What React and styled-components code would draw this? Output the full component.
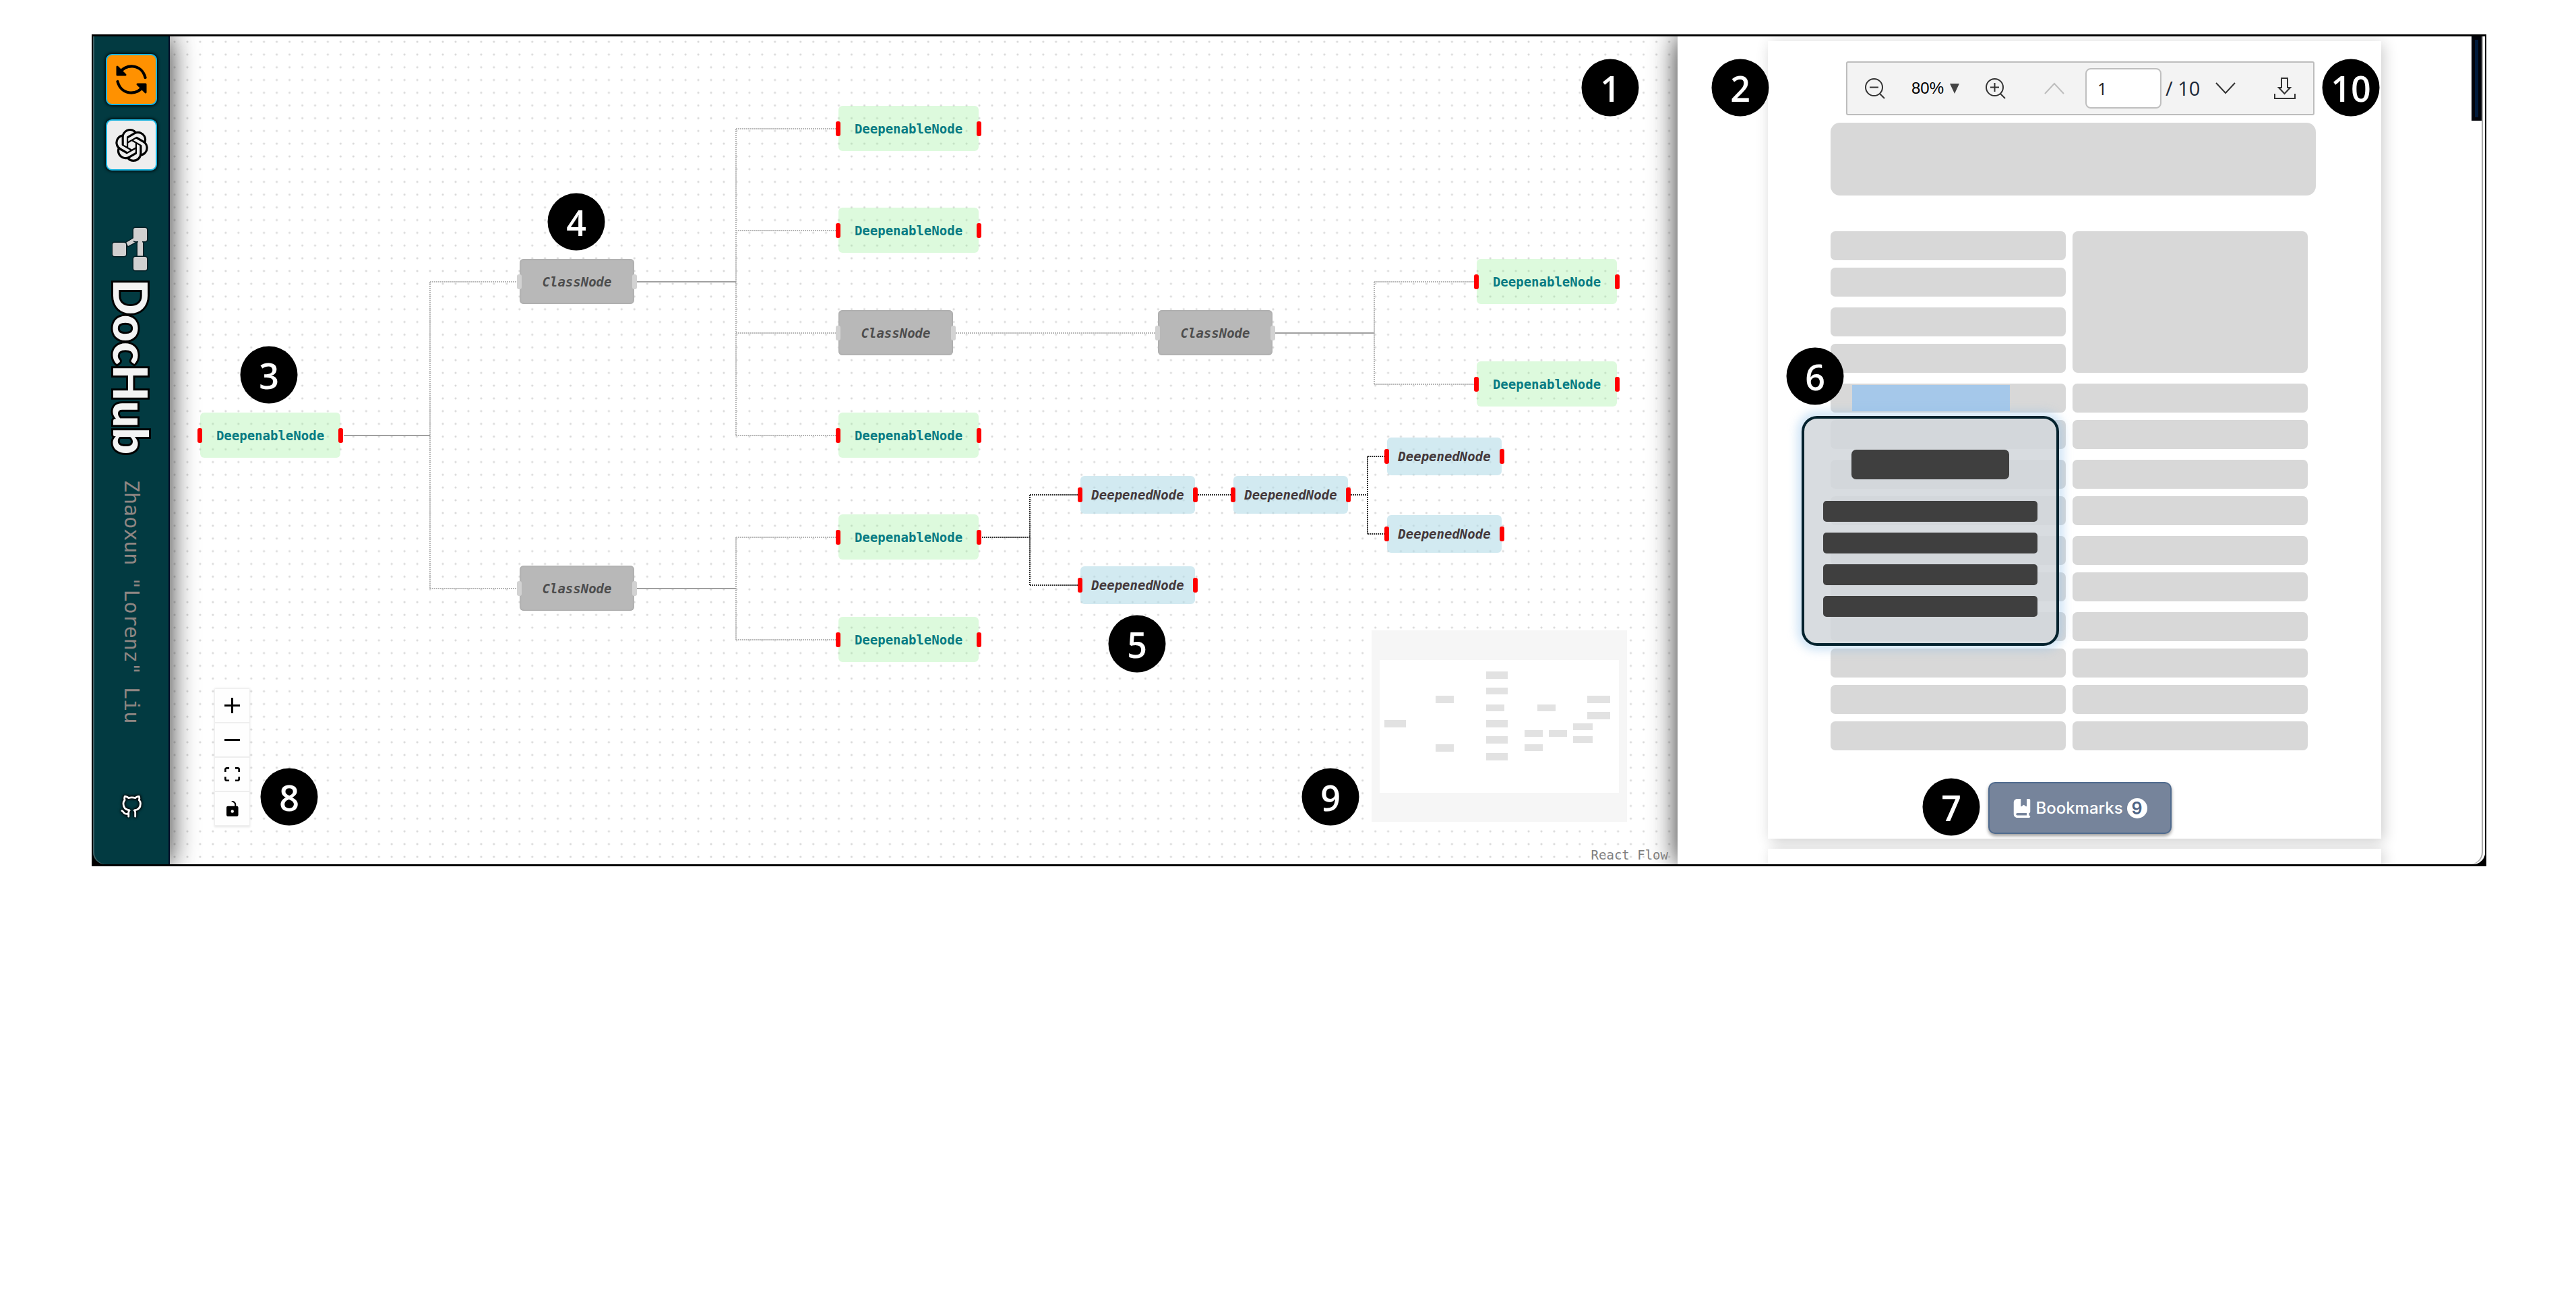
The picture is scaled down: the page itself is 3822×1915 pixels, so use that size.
import React from 'react';
import styled, { createGlobalStyle, css } from 'styled-components';
import { SiOpenai } from 'react-icons/si';
import { FaBookBookmark } from 'react-icons/fa6';
import { FiGithub } from 'react-icons/fi';

const mono = '"DejaVu Sans Mono", monospace';

const GlobalStyle = createGlobalStyle`
  * { box-sizing: border-box; }
  body { margin: 0; background: #fff; font-family: "Open Sans", sans-serif; }
  button { font: inherit; padding: 0; border: 0; background: none; color: inherit; cursor: pointer; }
`;

const Frame = styled.main`
  display: grid;
  grid-template-columns: 114px minmax(0, 2237fr) minmax(0, 1198fr);
  margin: 51px 133px 0 136px;
  border: solid #000;
  border-width: 3px 2px;
  background: #000;
  overflow: hidden;
`;

/* ---------- sidebar ---------- */

const Sidebar = styled.nav`
  display: flex;
  flex-direction: column;
  align-items: center;
  position: relative;
  z-index: 2;
  padding: 26px 0 68px 2px;
  background: #023a41;
  border-right: 2px solid #020c26;
  border-bottom-left-radius: 18px;
  box-shadow: inset 2px 0 #3f6065, 0 0 40px rgba(0, 0, 0, 0.85);
`;

const SideButton = styled.button`
  display: grid;
  place-items: center;
  width: 76px;
  height: 76px;
  margin-bottom: 21px;
  border: 2px solid #19b4e0;
  border-radius: 9px;
  background: ${(p) => p.$color};
  color: #000;
  box-shadow: 0 0 4px 1px #000;
`;

const Brand = styled.div`
  display: flex;
  flex-direction: column;
  align-items: center;
  margin-top: 61px;
`;

const BrandName = styled.h1`
  margin: 9px 0 0;
  writing-mode: vertical-rl;
  font: 900 70px/84px Lato, sans-serif;
  color: #f3f3f3;
  -webkit-text-stroke: 6px #000;
  paint-order: stroke fill;
`;

const Author = styled.span`
  margin-top: 38px;
  writing-mode: vertical-rl;
  font: 30px/36px ${mono};
  color: #8f8683;
`;

const GithubLink = styled.a`
  display: flex;
  margin-top: auto;
  color: #fff;
  filter: drop-shadow(0 0 2px #000) drop-shadow(0 0 1px #000);
`;

/* ---------- flow pane ---------- */

const FlowPane = styled.section`
  position: relative;
  background: #fff radial-gradient(circle at 7px 8px, #d9d9d9 1px, transparent 2px) 0 0 / 19px 19px round;
`;

const EdgeLayer = styled.svg`
  position: absolute;
  inset: 0;
  width: 100%;
  height: 100%;
  fill: none;
  stroke-width: 2;
`;

const variants = {
  deepenable: css`
    width: 208px; height: 67px; background: rgba(144, 238, 144, 0.3); color: #077b83;
    --handle: #f00;
  `,
  class: css`
    width: 170px; height: 67px; background: #b8b8b8; color: #4d4d4d; font-style: italic;
    box-shadow: inset 0 0 2px 1px #aaa;
    --handle: #d2d2d2;
  `,
  deepened: css`
    width: 170px; height: 56px; background: rgba(173, 216, 230, 0.55); color: #44383a; font-style: italic;
    --handle: #f00;
  `,
};

const NodeBox = styled.div`
  position: absolute;
  display: flex;
  align-items: center;
  justify-content: center;
  border-radius: 6px;
  font: 700 19px/22px ${mono};
  transform: translateY(${(p) => (p.$kind === 'deepened' ? '-28px' : '-34px')});
  ${(p) => variants[p.$kind]}
  &::before, &::after {
    content: "";
    position: absolute;
    top: calc(50% - 11px);
    width: 7px;
    height: 22px;
    border-radius: 3px;
    background: var(--handle);
  }
  &::before { left: -4px; }
  &::after { right: -4px; }
`;

const Controls = styled.div`
  position: absolute;
  left: 67px;
  bottom: 56px;
  display: flex;
  flex-direction: column;
  box-shadow: 0 0 3px 1px rgba(0, 0, 0, 0.1);
`;

const ControlButton = styled.button`
  display: grid;
  place-items: center;
  width: 51px;
  height: 51px;
  background: #fefefe;
  border-bottom: 2px solid #eee;
`;

const MiniMap = styled.svg`
  position: absolute;
  right: 75px;
  bottom: 63px;
  width: 379px;
  height: 284px;
  background: #f6f6f6;
`;

const Attribution = styled.a`
  position: absolute;
  right: 0;
  bottom: 0;
  z-index: 4;
  padding: 2px 14px 2px 12px;
  font: 19px/24px ${mono};
  color: #808080;
  text-decoration: none;
`;

const Callout = styled.span`
  position: absolute;
  z-index: 5;
  display: grid;
  place-items: center;
  width: 85px;
  height: 85px;
  border-radius: 50%;
  transform: translate(-50%, -50%);
  background: #000;
  color: #fff;
  font: 600 52px/64px "Open Sans", sans-serif;
`;

/* ---------- document pane ---------- */

const DocPane = styled.section`
  position: relative;
  z-index: 2;
  display: grid;
  grid-template-columns: minmax(0, 1fr) 20px;
  background: #fff;
  border-bottom-right-radius: 18px;
  box-shadow: inset -3px 0 #fff, inset -5px 0 #aaa, 0 0 40px rgba(0, 0, 0, 0.85);
`;

const ScrollThumb = styled.div`
  width: 15px;
  height: 125px;
  border: 5px solid #02040a;
  background: #001a3c;
`;

const Pages = styled.div`
  display: flex;
  flex-direction: column;
  align-items: center;
  gap: 15px;
  padding-top: 7px;
  overflow: hidden;
`;

const Page = styled.article`
  width: 910px;
  padding: ${(p) => (p.$peek ? '0' : '30px 97px 131px 93px')};
  min-height: 23px;
  background: #fff;
  box-shadow: 4px 4px 20px rgba(0, 0, 0, 0.2);
`;

const Toolbar = styled.div`
  position: relative;
  display: flex;
  align-items: center;
  height: 80px;
  margin: 0 2px 0 23px;
  padding: 0 25px;
  background: #f3f3f3;
  border: 2px solid #bdbdbd;
  border-radius: 3px;
  color: #222;
`;

const ToolButton = styled.button`
  display: flex;
  margin-left: ${(p) => p.$gap || 0}px;
  color: ${(p) => (p.disabled ? '#bdbdbd' : '#333')};
`;

const ZoomLevel = styled.button`
  display: flex;
  align-items: center;
  gap: 9px;
  margin: 0 39px;
  font: 24px/30px "Liberation Sans", Arial, sans-serif;
  color: #000;
`;

const PageInput = styled.input`
  width: 113px;
  height: 60px;
  margin-left: 31px;
  padding: 0 16px;
  border: 2px solid #bfbfbf;
  border-radius: 8px;
  background: #fff;
  color: #222;
  font: 25px/30px "Open Sans", sans-serif;
`;

const PageTotal = styled.span`
  margin-left: 6px;
  width: 50px;
  white-space: nowrap;
  font: 29px/40px "Open Sans", sans-serif;
  color: #1c2838;
`;

const Banner = styled.div`
  height: 108px;
  margin: 11px 0 53px;
  border-radius: 14px;
  background: #d8d8d8;
`;

const Columns = styled.div`
  display: grid;
  grid-template-columns: 349px 349px;
  gap: 10px;
  align-items: start;
`;

const Column = styled.div`
  display: flex;
  flex-direction: column;
  gap: 16px;
`;

const Paragraph = styled.div`
  display: grid;
  gap: 11px;
`;

const Line = styled.div`
  height: 43px;
  border-radius: 7px;
  background: #d8d8d8;
`;

const Figure = styled.div`
  height: 210px;
  border-radius: 8px;
  background: #d8d8d8;
`;

const MarkedLine = styled(Line)`
  padding: 2px 83px 2px 32px;
`;

const Highlight = styled.div`
  height: 39px;
  background: #a5c8ea;
`;

const Popup = styled.aside`
  position: absolute;
  left: 184px;
  top: 563px;
  z-index: 3;
  width: 382px;
  height: 341px;
  display: flex;
  flex-direction: column;
  align-items: center;
  gap: 16px;
  padding-top: 46px;
  border: 4px solid #03222e;
  border-radius: 23px;
  background: rgba(210, 215, 219, 0.87);
  box-shadow: 0 0 14px 7px rgba(140, 190, 232, 0.4);
`;

const PopupTitle = styled.div`
  width: 234px;
  height: 44px;
  margin-bottom: 16px;
  border-radius: 7px;
  background: #3f3f3f;
`;

const PopupLine = styled.div`
  width: 318px;
  height: 31px;
  border-radius: 5px;
  background: #3f3f3f;
`;

const Bookmarks = styled.button`
  position: absolute;
  left: 461px;
  bottom: 45px;
  z-index: 3;
  display: flex;
  align-items: center;
  justify-content: center;
  gap: 6px;
  width: 272px;
  height: 77px;
  border: 2px solid #506b8e;
  border-radius: 10px;
  background: #76849b;
  box-shadow: 0 3px 5px rgba(0, 0, 0, 0.4);
  color: #fff;
  font: 500 24px/30px Inter, sans-serif;
`;

const Count = styled.span`
  display: grid;
  place-items: center;
  width: 30px;
  height: 30px;
  border-radius: 50%;
  background: #fff;
  color: #4d6384;
  font-weight: 600;
  font-size: 25px;
`;

/* ---------- data ---------- */

const nodes = [
  ['deepenable', 45, 592], ['class', 519, 364], ['class', 519, 819],
  ['deepenable', 992, 137], ['deepenable', 992, 288], ['class', 992, 440],
  ['deepenable', 992, 592], ['deepenable', 992, 743], ['deepenable', 992, 895],
  ['class', 1466, 440], ['deepenable', 1939, 364], ['deepenable', 1939, 516],
  ['deepened', 1351, 680], ['deepened', 1351, 814], ['deepened', 1578, 680],
  ['deepened', 1806, 623], ['deepened', 1806, 738],
];
const labels = { deepenable: 'DeepenableNode', class: 'ClassNode', deepened: 'DeepenedNode' };

const lightEdges =
  'M386 364V819 M386 364H515 M386 819H515 M840 137V592 M840 137H988 M840 288H988 M840 440H988 M840 592H988 ' +
  'M840 743V895 M840 743H988 M840 895H988 M1166 440H1462 M1787 364V516 M1787 364H1935 M1787 516H1935';
const sharedEdges = 'M258 592H386 M693 364H840 M693 819H840 M1640 440H1787';
const darkEdges =
  'M1205 743H1276 M1276 680V814 M1276 680H1347 M1276 814H1347 M1525 680H1574 M1752 680H1777 M1777 623V738 M1777 623H1802 M1777 738H1802';

const miniNodes = [
  [19, 133, 32, 11], [95, 97, 27, 11], [95, 169, 27, 11], [170, 61, 32, 11], [170, 85, 32, 10],
  [170, 110, 27, 10], [170, 133, 32, 11], [170, 157, 32, 11], [170, 182, 32, 11], [246, 110, 27, 10],
  [227, 148, 27, 10], [263, 148, 27, 10], [227, 169, 27, 10], [299, 138, 29, 10], [299, 157, 29, 10],
  [320, 97, 34, 11], [320, 121, 34, 11],
];

const controls = [
  ['Zoom in', '0 0 32 32', 23, 'M32 18.133H18.133V32h-4.266V18.133H0v-4.266h13.867V0h4.266v13.867H32z'],
  ['Zoom out', '0 0 32 5', 23, 'M0 0h32v4.2H0z'],
  ['Fit view', '0 0 32 30', 23, 'M3.692 4.63c0-.53.4-.938.939-.938h5.215V0H4.708C2.13 0 0 2.054 0 4.63v5.216h3.692V4.631zM27.354 0h-5.2v3.692h5.17c.53 0 .984.4.984.939v5.215H32V4.631A4.624 4.624 0 0027.354 0zm.954 24.83c0 .532-.4.94-.939.94h-5.215v3.768h5.215c2.577 0 4.631-2.13 4.631-4.707v-5.139h-3.692v5.139zm-23.677.94c-.531 0-.939-.4-.939-.94v-5.138H0v5.139c0 2.577 2.13 4.707 4.708 4.707h5.138V25.77H4.631z'],
  ['Lock', '0 0 25 32', 18, 'M21.333 10.667H19.81V7.619C19.81 3.429 16.38 0 12.19 0c-4.114 1.828-1.37 2.133.305 2.438 1.676.305 4.42 2.59 4.42 5.181v3.048H3.047A3.056 3.056 0 000 13.714v15.238A3.056 3.056 0 003.048 32h18.285a3.056 3.056 0 003.048-3.048V13.714a3.056 3.056 0 00-3.048-3.047zM12.19 24.533a3.056 3.056 0 01-3.047-3.047 3.056 3.056 0 013.047-3.048 3.056 3.056 0 013.048 3.048 3.056 3.056 0 01-3.048 3.047z'],
];

const flowCallouts = [[1, 2137, 76], [3, 147, 502], [4, 603, 275], [5, 1435, 901], [8, 177, 1128], [9, 1722, 1128]];
const docCallouts = [[2, 93, 76], [6, 204, 504], [7, 406, 1143], [10, 999, 76]];

const Callouts = ({ items }) =>
  items.map(([n, x, y]) => <Callout key={n} style={{ left: x, top: y }}>{n}</Callout>);

/* ---------- icons ---------- */

const RefreshIcon = () => (
  <svg width="46" height="46" viewBox="0 0 46 46" fill="none" stroke="#000" strokeWidth="4.2" strokeLinecap="round">
    <path d="M5 14C13-1 38-1 43.500 20" />
    <path d="M41 32C33 47 8 47 2.500 26" />
    <path d="M2 4V16H14Z" fill="#000" strokeWidth="3" strokeLinejoin="round" />
    <path d="M44 42V30H32Z" fill="#000" strokeWidth="3" strokeLinejoin="round" />
  </svg>
);

const BrandIcon = () => (
  <svg width="58" height="70" viewBox="-1 -3 58 70" fill="#d0d0d0" stroke="#011c22" strokeWidth="3" paintOrder="stroke" strokeLinejoin="round">
    <path d="M20 22L38 12V19L23 27Z" />
    <path d="M37 15H45V48H37Z" />
    <rect x="31" y="0" width="20" height="20" rx="3" />
    <rect x="0" y="22" width="20" height="20" rx="3" />
    <rect x="31" y="43" width="20" height="20" rx="3" />
    <path d="M22 21L33 14V18L24 25Z M38 18H44V41H38Z" stroke="none" />
  </svg>
);

const ZoomIcon = ({ plus }) => (
  <svg width="30" height="32" viewBox="0 0 30 32" fill="none" stroke="currentColor" strokeWidth="2">
    <circle cx="13.500" cy="14.500" r="12.500" />
    <path d={'M22 24L29 31M7 14.500H20' + (plus ? 'M13.500 8V21' : '')} />
  </svg>
);

const Chevron = ({ down }) => (
  <svg width="30" height="18" viewBox="0 0 30 18" fill="none" stroke="currentColor" strokeWidth="2">
    <path d={down ? 'M1 1L15 16L29 1' : 'M1 17L15 2L29 17'} />
  </svg>
);

const DownloadIcon = () => (
  <svg width="32" height="32" viewBox="0 0 32 32" fill="none" stroke="currentColor" strokeWidth="2">
    <path d="M11 1H20V15H24L15.500 24L7 15H11Z M1 24V31H31V24" />
  </svg>
);

const Triangle = () => (
  <svg width="14" height="15" viewBox="0 0 14 15" fill="#444"><path d="M0 0H14L7 15Z" /></svg>
);

/* ---------- page ---------- */

const Lines = ({ n = 2 }) => (
  <Paragraph>{Array.from({ length: n }, (_, i) => <Line key={i} />)}</Paragraph>
);

export default function App() {
  return (
    <>
      <GlobalStyle />
      <Frame>
        <Sidebar>
          <SideButton $color="#ff9100" aria-label="Refresh"><RefreshIcon /></SideButton>
          <SideButton $color="#eee" aria-label="Assistant"><SiOpenai size={49} /></SideButton>
          <Brand>
            <BrandIcon />
            <BrandName>DocHub</BrandName>
            <Author>Zhaoxun "Lorenz" Liu</Author>
          </Brand>
          <GithubLink href="#" aria-label="GitHub"><FiGithub size={34} /></GithubLink>
        </Sidebar>

        <FlowPane>
          <EdgeLayer>
            <path d={lightEdges} stroke="#b8b8b8" strokeDasharray="2 1" />
            <path d={sharedEdges} stroke="#a0a0a0" />
            <path d={darkEdges} stroke="#333" strokeDasharray="2 1" />
          </EdgeLayer>
          {nodes.map(([kind, x, y], i) => (
            <NodeBox key={i} $kind={kind} style={{ left: x, top: y }}>{labels[kind]}</NodeBox>
          ))}
          <Controls>
            {controls.map(([label, box, width, d]) => (
              <ControlButton key={label} aria-label={label}>
                <svg width={width} viewBox={box}><path d={d} /></svg>
              </ControlButton>
            ))}
          </Controls>
          <MiniMap viewBox="0 0 379 284">
            <rect x="12" y="44" width="355" height="197" fill="#fff" />
            {miniNodes.map(([x, y, w, h], i) => (
              <rect key={i} x={x} y={y} width={w} height={h} fill="#e2e2e2" />
            ))}
          </MiniMap>
          <Attribution href="#">React Flow</Attribution>
          <Callouts items={flowCallouts} />
        </FlowPane>

        <DocPane>
          <Pages>
            <Page>
              <Toolbar>
                <ToolButton aria-label="Zoom out" $gap={1}><ZoomIcon /></ToolButton>
                <ZoomLevel>80%<Triangle /></ZoomLevel>
                <ToolButton aria-label="Zoom in"><ZoomIcon plus /></ToolButton>
                <ToolButton aria-label="Previous page" $gap={57} disabled><Chevron /></ToolButton>
                <PageInput aria-label="Page" defaultValue="1" />
                <PageTotal>/ 10</PageTotal>
                <ToolButton aria-label="Next page" $gap={24}><Chevron down /></ToolButton>
                <ToolButton aria-label="Download" $gap={57}><DownloadIcon /></ToolButton>
              </Toolbar>
              <Banner />
              <Columns>
                <Column>
                  <Lines />
                  <Lines />
                  <Paragraph>
                    <MarkedLine><Highlight /></MarkedLine>
                    <Line />
                  </Paragraph>
                  <Lines />
                  <Lines />
                  <Lines n={4} />
                </Column>
                <Column>
                  <Figure />
                  <Lines />
                  <Lines />
                  <Lines />
                  <Lines n={4} />
                </Column>
              </Columns>
            </Page>
            <Page $peek />
          </Pages>
          <ScrollThumb />
          <Popup>
            <PopupTitle />
            <PopupLine />
            <PopupLine />
            <PopupLine />
            <PopupLine />
          </Popup>
          <Bookmarks><FaBookBookmark size={28} />Bookmarks<Count>9</Count></Bookmarks>
          <Callouts items={docCallouts} />
        </DocPane>
      </Frame>
    </>
  );
}
